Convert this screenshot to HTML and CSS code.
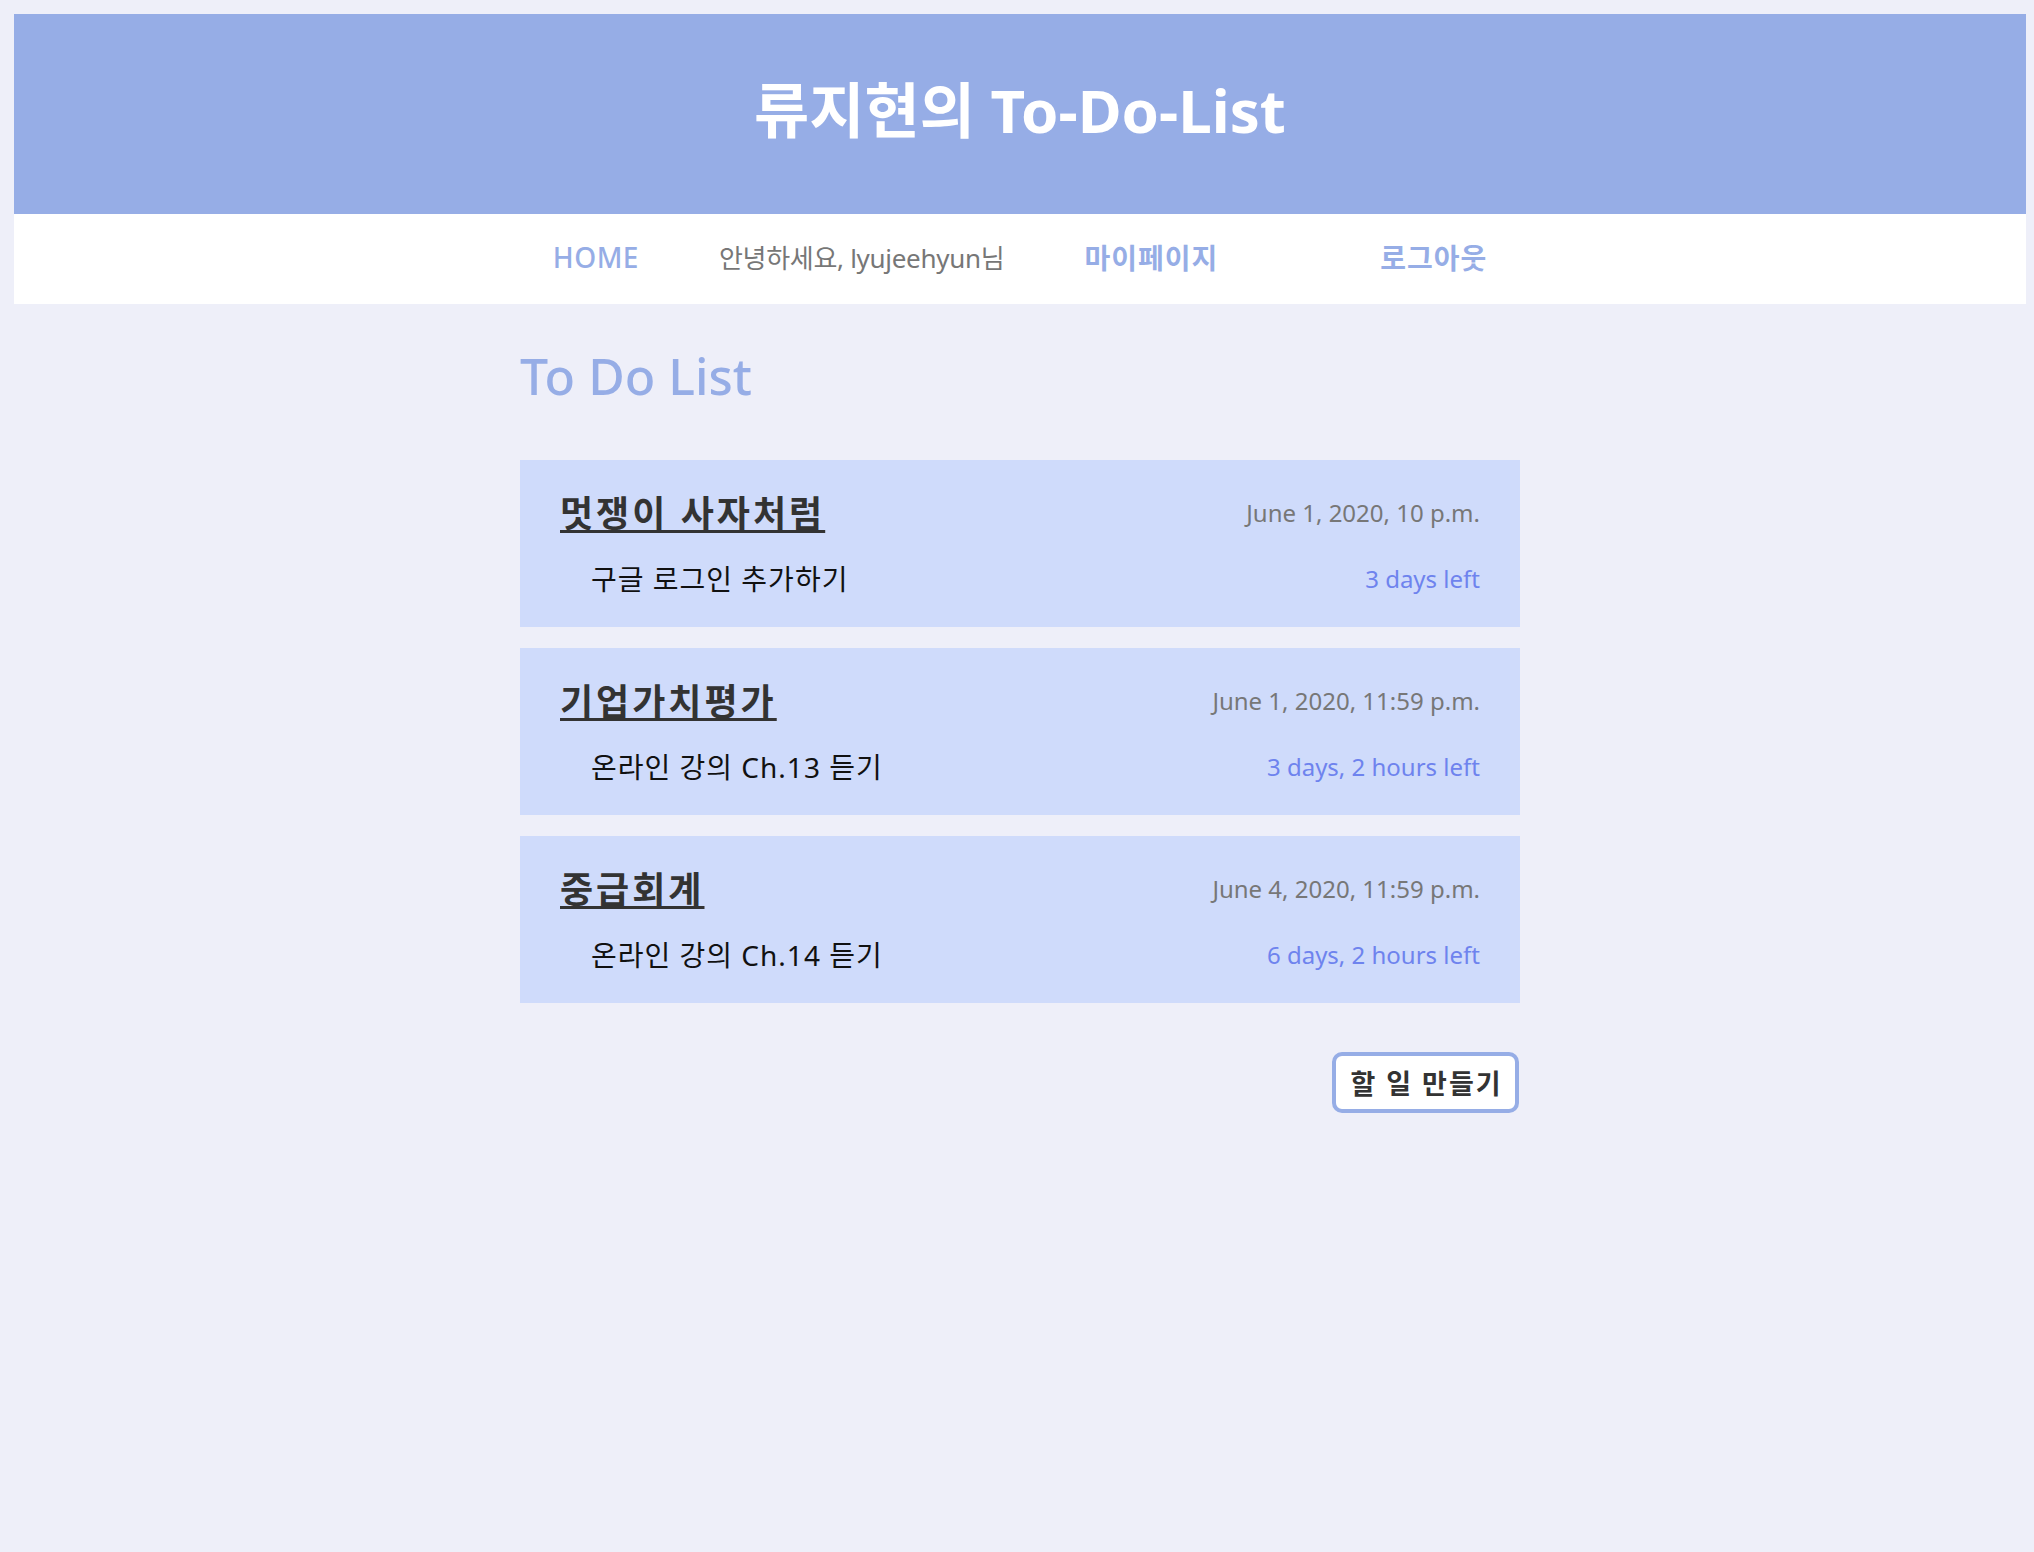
FILE: index.html
```html
<!DOCTYPE html>
<html lang="ko">
<head>
<meta charset="utf-8">
<title>To-Do-List</title>
<link rel="stylesheet" href="styles.css">
</head>
<body>
<header class="site-header">
  <h1 class="site-title"><span class="ko">류지현의</span> To-Do-List</h1>
</header>
<nav class="site-nav">
  <a class="nav-link nav-home" href="#">HOME</a>
  <span class="nav-greeting"><span class="ko">안녕하세요</span>, lyujeehyun<span class="ko">님</span></span>
  <a class="nav-link nav-bold" href="#">마이페이지</a>
  <a class="nav-link nav-bold nav-logout" href="#">로그아웃</a>
</nav>
<main class="content">
  <h2 class="list-title">To Do List</h2>
  <ul class="todo-list">
    <li class="todo-card">
      <div class="todo-row todo-head">
        <a class="todo-title" href="#">멋쟁이 사자처럼</a>
        <span class="todo-date">June 1, 2020, 10 p.m.</span>
      </div>
      <div class="todo-row todo-body">
        <p class="todo-desc">구글 로그인 추가하기</p>
        <span class="todo-left">3 days left</span>
      </div>
    </li>
    <li class="todo-card">
      <div class="todo-row todo-head">
        <a class="todo-title" href="#">기업가치평가</a>
        <span class="todo-date">June 1, 2020, 11:59 p.m.</span>
      </div>
      <div class="todo-row todo-body">
        <p class="todo-desc">온라인 강의 Ch.13 듣기</p>
        <span class="todo-left">3 days, 2 hours left</span>
      </div>
    </li>
    <li class="todo-card">
      <div class="todo-row todo-head">
        <a class="todo-title" href="#">중급회계</a>
        <span class="todo-date">June 4, 2020, 11:59 p.m.</span>
      </div>
      <div class="todo-row todo-body">
        <p class="todo-desc">온라인 강의 Ch.14 듣기</p>
        <span class="todo-left">6 days, 2 hours left</span>
      </div>
    </li>
  </ul>
  <div class="actions">
    <button class="make-btn" type="button">할 일 만들기</button>
  </div>
</main>
</body>
</html>
```
FILE: styles.css
```css
html {
  background: #eeeff9;
}
body {
  margin: 14px 8px 14px 14px;
  font-family: "Noto Sans", "Noto Sans CJK KR", sans-serif;
  font-feature-settings: "palt";
  color: #111;
}
.site-header {
  height: 200px;
  box-sizing: border-box;
  padding-bottom: 9px;
  background: #96ade6;
  display: flex;
  align-items: center;
  justify-content: center;
}
.site-title {
  margin: 0;
  color: #fff;
  font-size: 60px;
  font-weight: 700;
  line-height: 1;
}
.site-nav {
  height: 90px;
  box-sizing: border-box;
  padding-bottom: 5px;
  background: #fff;
  display: flex;
  align-items: center;
  justify-content: center;
  gap: 80px;
}
.nav-link {
  color: #96ade6;
  font-size: 28px;
  text-decoration: none;
}
.nav-home {
  font-weight: 500;
  letter-spacing: 0.5px;
}
.nav-bold {
  font-weight: 700;
  letter-spacing: 1px;
}
.nav-logout {
  margin-left: 82px;
}
.nav-greeting {
  color: #777;
  font-size: 26px;
  letter-spacing: -0.3px;
}
.content {
  width: 1000px;
  margin: 0 auto;
}
.list-title {
  margin: 43px 0 0;
  color: #96ade6;
  font-size: 50px;
  font-weight: 500;
  line-height: 59px;
}
.todo-list {
  list-style: none;
  margin: 54px 0 0;
  padding: 0;
  display: flex;
  flex-direction: column;
  gap: 21px;
}
.todo-card {
  background: #cfdbfb;
  height: 167px;
  box-sizing: border-box;
  padding: 26px 40px 27px;
}
.todo-row {
  display: flex;
  align-items: center;
  justify-content: space-between;
}
.todo-head {
  height: 50px;
}
.todo-body {
  height: 40px;
  margin-top: 22px;
}
.todo-title {
  color: #333;
  font-size: 36px;
  font-weight: 700;
  font-feature-settings: normal;
  letter-spacing: 3px;
  text-decoration: underline;
  text-decoration-thickness: 3px;
  text-underline-offset: 3px;
}
.todo-date {
  color: #777;
  font-size: 24px;
  padding-top: 3px;
}
.todo-desc {
  margin: 0 0 0 31px;
  font-size: 28px;
  letter-spacing: 1px;
  color: #111;
}
.todo-left {
  color: #6e83ee;
  font-size: 24px;
}
.actions {
  display: flex;
  justify-content: flex-end;
  margin-top: 49px;
}
.make-btn {
  width: 187px;
  height: 61px;
  margin-right: 1px;
  box-sizing: border-box;
  background: #fff;
  border: 4px solid #96ade6;
  border-radius: 10px;
  font-family: "Noto Sans", "Noto Sans CJK KR", sans-serif;
  font-feature-settings: normal;
  font-size: 27px;
  font-weight: 700;
  letter-spacing: 2px;
  text-indent: 2px;
  color: #333;
  padding: 0;
}
```
